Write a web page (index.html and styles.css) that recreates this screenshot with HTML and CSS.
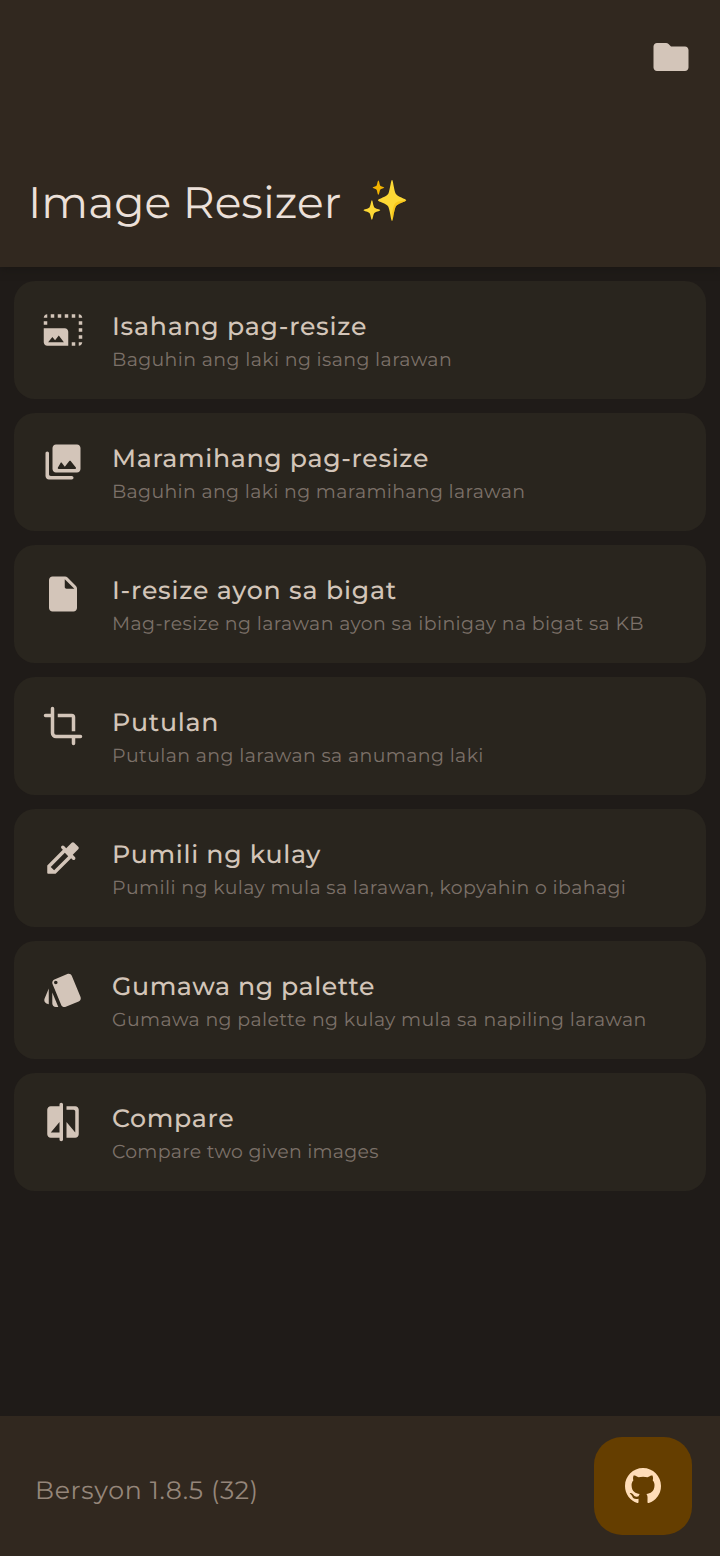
FILE: index.html
```html
<!DOCTYPE html>
<html lang="fil">
<head>
<meta charset="utf-8">
<title>Image Resizer</title>
<link rel="stylesheet" href="styles.css">
</head>
<body>
<div class="app">
  <header class="header">
    <svg class="icon folder" viewBox="0 0 24 24"><path d="M10.600 4.600C10.200 4.200 9.700 4 9.200 4H4C2.900 4 2 4.900 2 6V18C2 19.100 2.900 20 4 20H20C21.100 20 22 19.100 22 18V8C22 6.900 21.100 6 20 6H12Z"/></svg>
    <h1 class="heading"><span class="name">Image Resizer</span>
      <svg class="sparkles" viewBox="0 0 42 42">
        <g class="spark-shadow"><path d="M28.500 2C30 14 32 18.500 42 21C32 23.500 30 28 28.500 41C27 28 25 23.500 15 21C25 18.500 27 14 28.500 2Z"/><path d="M9.500 21C10.500 27 12 28.500 17.500 30.500C12 32.500 10.500 34 9.500 40C8.500 34 7 32.500 1.500 30.500C7 28.500 8.500 27 9.500 21Z"/></g>
        <path class="spark" d="M27.700 .8C28.700 .8 29.300 9 31 13.500C32.500 17 41.300 18.800 41.300 20.300C41.300 21.800 33 23 31.200 26.500C29.300 31 28.700 40 27.700 40C26.700 40 26 31 24.200 26.500C22.500 23 14.200 21.800 14.200 20.300C14.200 18.800 23 17 24.400 13.500C26 9 26.700 .8 27.700 .8Z"/>
        <path class="spark-shade" d="M41.300 20.300C41.300 21.800 33 23 31.200 26.500C29.300 31 28.700 40 27.700 40L27.500 33C29.500 26 29.500 23 33.500 21.500Z"/>
        <path class="spark" d="M8.500 20.300C9.300 20.300 9.600 25 10.700 27C11.700 28.500 16.500 29 16.500 29.800C16.500 30.600 11.700 31.100 10.700 32.800C9.600 34.700 9.300 39 8.500 39C7.700 39 7.400 34.700 6.300 32.800C5.300 31.100 .5 30.600 .5 29.800C.5 29 5.300 28.500 6.300 27C7.400 25 7.700 20.300 8.500 20.300Z"/>
        <path class="spark-small" d="M14.700 1.500C15.500 1.500 15.700 5.200 16.500 6.400C17.200 7.300 20.300 7.500 20.300 8.200C20.300 8.900 17.200 9.200 16.500 10.200C15.700 11.500 15.500 15 14.700 15C13.900 15 13.700 11.500 12.900 10.200C12.200 9.200 9.200 8.900 9.200 8.200C9.200 7.500 12.200 7.300 12.900 6.400C13.700 5.200 13.900 1.500 14.700 1.500Z"/>
      </svg>
    </h1>
  </header>

  <main class="list">
    <article class="card">
      <svg class="icon" viewBox="0 0 24 24"><path d="M3 3v2H1c0-1.100.9-2 2-2zM5 3h2v2H5zM9 3h2v2H9zM13 3h2v2h-2zM17 3h2v2h-2zM21 3c1.100 0 2 .9 2 2h-2zM1 7h2v2H1zM21 7h2v2h-2zM21 11h2v2h-2zM21 15h2v2h-2zM17 19h2v2h-2zM21 19h2c0 1.100-.9 2-2 2zM1 11h12c1.100 0 2 .9 2 2v8H3c-1.100 0-2-.9-2-2zM3.500 19h9l-2.900-3.870-2.140 2.720L5.930 16z" fill-rule="evenodd"/></svg>
      <div class="copy"><h2 class="title">Isahang pag-resize</h2><p class="sub">Baguhin ang laki ng isang larawan</p></div>
    </article>
    <article class="card">
      <svg class="icon" viewBox="0 0 24 24"><path d="M22 16V4c0-1.100-.9-2-2-2H8c-1.100 0-2 .9-2 2v12c0 1.100.9 2 2 2h12c1.100 0 2-.9 2-2zm-10.600-3.470l1.630 2.180 2.580-3.220c.2-.25.58-.25.780 0l2.960 3.700c.26.33.03.81-.39.81H9.500c-.41 0-.65-.47-.4-.8l1.500-2.670c.2-.26.600-.26.800 0zM2 7v13c0 1.100.9 2 2 2h13c.55 0 1-.45 1-1s-.45-1-1-1H5c-.55 0-1-.45-1-1V7c0-.55-.45-1-1-1s-1 .45-1 1z"/></svg>
      <div class="copy"><h2 class="title snug">Maramihang pag-resize</h2><p class="sub sub-snug">Baguhin ang laki ng maramihang larawan</p></div>
    </article>
    <article class="card">
      <svg class="icon" viewBox="0 0 24 24"><path d="M4 4c0-1.100.9-2 2-2h7.170c.53 0 1.040.21 1.410.59l4.830 4.830c.37.37.59.88.59 1.410V20c0 1.100-.9 2-2 2H6c-1.100 0-2-.9-2-2zm9-.5V8c0 .55.45 1 1 1h4.500z"/></svg>
      <div class="copy"><h2 class="title loose">I-resize ayon sa bigat</h2><p class="sub sub-loose">Mag-resize ng larawan ayon sa ibinigay na bigat sa KB</p></div>
    </article>
    <article class="card">
      <svg class="icon line" viewBox="0 0 24 24"><path class="round" d="M6 2V16a2 2 0 0 0 2 2H22M2 6H6M18 18v4"/><path d="M9 6H17a1 1 0 0 1 1 1v8"/></svg>
      <div class="copy"><h2 class="title">Putulan</h2><p class="sub">Putulan ang larawan sa anumang laki</p></div>
    </article>
    <article class="card">
      <svg class="icon" viewBox="0 0 24 24"><path d="M20.710 5.630l-2.340-2.340c-.39-.39-1.020-.39-1.410 0l-3.120 3.120-1.230-1.210c-.39-.39-1.020-.39-1.410 0s-.39 1.020 0 1.410l.72.720L3 16.250V20.500c0 .28.22.5.5.5h4.250l8.920-8.920.72.720c.39.39 1.020.39 1.410 0s.39-1.020 0-1.410l-1.220-1.220 3.120-3.120c.4-.4.4-1.030.01-1.420zM6.920 19L5 17.080l8.060-8.060 1.920 1.920z"/></svg>
      <div class="copy"><h2 class="title snug">Pumili ng kulay</h2><p class="sub">Pumili ng kulay mula sa larawan, kopyahin o ibahagi</p></div>
    </article>
    <article class="card">
      <svg class="icon" viewBox="0 0 24 24"><path d="M2.530 19.650l1.340.56v-9.030l-2.430 5.860c-.41 1.020.08 2.190 1.090 2.610zm19.500-3.700L17.070 3.980c-.31-.75-1.040-1.210-1.810-1.230-.26 0-.53.04-.79.15L7.100 5.950c-.75.31-1.210 1.030-1.230 1.800-.01.27.04.54.15.8l4.960 11.970c.31.76 1.050 1.220 1.830 1.230.26 0 .52-.05.77-.15l7.360-3.050c1.020-.42 1.510-1.590 1.090-2.600zM7.880 8.750c-.55 0-1-.45-1-1s.45-1 1-1 1 .45 1 1-.45 1-1 1zm-2 11c0 1.100.9 2 2 2h1.450l-3.450-8.340z"/></svg>
      <div class="copy"><h2 class="title tight">Gumawa ng palette</h2><p class="sub">Gumawa ng palette ng kulay mula sa napiling larawan</p></div>
    </article>
    <article class="card">
      <svg class="icon" viewBox="0 0 24 24"><path d="M10 3H5c-1.100 0-2 .9-2 2v14c0 1.100.9 2 2 2h5v1c0 .55.45 1 1 1s1-.45 1-1V2c0-.55-.45-1-1-1s-1 .45-1 1zm0 15H5l5-6zM19 3h-5v2h4c.55 0 1 .45 1 1v12l-5-6v9h5c1.100 0 2-.9 2-2V5c0-1.100-.9-2-2-2z"/></svg>
      <div class="copy"><h2 class="title snug">Compare</h2><p class="sub sub-tight">Compare two given images</p></div>
    </article>
  </main>

  <footer class="footer">
    <span class="version">Bersyon 1.8.5 (32)</span>
    <button class="fab" aria-label="GitHub"><svg class="github" viewBox="0 0 16 16"><path d="M8 0C3.580 0 0 3.580 0 8c0 3.540 2.290 6.530 5.470 7.590.2.04.55-.17.55-.38 0-.19-.01-.82-.01-1.490-2.010.37-2.530-.49-2.690-.94-.09-.23-.48-.94-.82-1.130-.28-.15-.68-.52-.01-.53.63-.01 1.080.58 1.230.82.72 1.210 1.870.87 2.330.66.07-.52.28-.87.51-1.070-1.780-.2-3.640-.89-3.640-3.950 0-.87.31-1.590.82-2.150-.08-.2-.36-1.020.08-2.120 0 0 .67-.21 2.200.82.64-.18 1.320-.27 2-.27s1.360.09 2 .27c1.530-1.040 2.200-.82 2.200-.82.44 1.100.16 1.920.08 2.120.51.56.82 1.270.82 2.150 0 3.070-1.870 3.750-3.650 3.950.29.25.54.73.54 1.480 0 1.070-.01 1.930-.01 2.200 0 .21.15.46.55.38A8.010 8.010 0 0 0 16 8c0-4.420-3.580-8-8-8z"/></svg></button>
  </footer>
</div>
</body>
</html>
```
FILE: styles.css
```css
* { box-sizing: border-box; }
body { margin: 0; background: #1f1b18; font-family: Montserrat, Inter, "Noto Sans", sans-serif; text-rendering: geometricPrecision; }
h1, h2, p { margin: 0; }
.app { display: flex; flex-direction: column; width: 720px; height: 1556px; }
.header { display: flex; flex-direction: column; height: 267px; padding: 36px 28px 0; background: #31281f; box-shadow: 0 2px 8px #1a1714; }
.icon { display: block; flex: none; width: 42px; height: 42px; fill: #d3c5b9; }
.folder { align-self: flex-end; }
.heading { display: flex; align-items: flex-start; margin-top: 97px; color: #ece0d9; font-size: 44.1px; font-weight: 400; line-height: 56px; }
.name { width: 335px; white-space: nowrap; letter-spacing: .04px; }
.sparkles { width: 44px; height: 44px; margin-top: 4px; overflow: visible; }
.spark { fill: #fdd835; }
.spark-small { fill: #f4b400; }
.spark-shade { fill: #f4b400; opacity: .5; }
.spark-shadow { fill: #15120d; opacity: .35; }
.list { display: flex; flex: 1; flex-direction: column; gap: 14px; padding: 14px; }
.card { display: flex; gap: 28px; height: 118px; padding: 28px; border-radius: 21px; background: #29251e; }
.line { fill: none; stroke: #d3c5b9; stroke-width: 2; }
.round { stroke-linecap: round; }
.copy { min-width: 0; padding-top: 1px; white-space: nowrap; }
.title { color: #d3c5b9; font-size: 25.2px; font-weight: 500; line-height: 34px; letter-spacing: .75px; }
.title.snug { letter-spacing: .66px; }
.title.tight { letter-spacing: .58px; }
.title.loose { letter-spacing: .8px; }
.sub { color: #7c7169; font-size: 18.9px; font-weight: 400; line-height: 24px; margin-top: 4px; letter-spacing: .4px; }
.sub-snug { letter-spacing: .36px; }
.sub-tight { letter-spacing: .28px; }
.sub-loose { letter-spacing: .42px; }
.footer { display: flex; align-items: flex-start; justify-content: space-between; height: 140px; padding: 21px 28px 21px 35px; background: #31281f; }
.version { margin-top: 38px; color: #95867a; font-size: 25.2px; line-height: 32px; letter-spacing: .68px; }
.fab { display: flex; align-items: center; justify-content: center; width: 98px; height: 98px; padding: 0; border: 0; border-radius: 28px; background: #653e00; }
.github { width: 36px; height: 36px; fill: #ffddb8; }
```
